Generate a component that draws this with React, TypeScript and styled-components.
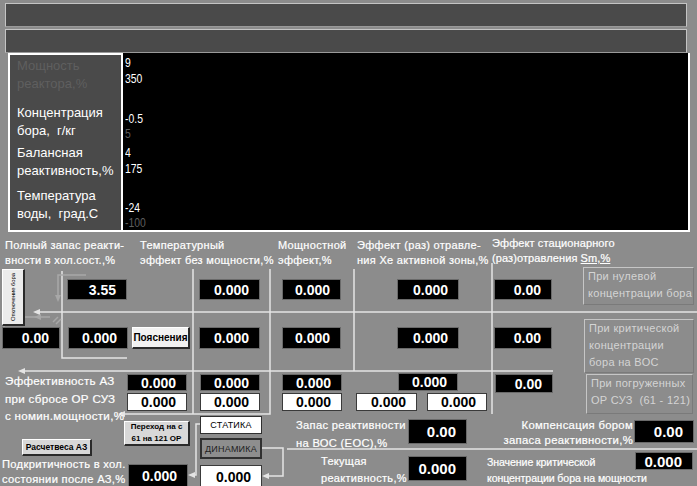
import styled, { createGlobalStyle, css } from "styled-components";

const DIAGRAM_TOP = 231;

const GlobalStyle = createGlobalStyle`
  html, body {
    margin: 0;
    padding: 0;
    background: #8c8c8c;
    overflow: hidden;
  }
  body {
    font-family: "Liberation Sans", Arial, sans-serif;
  }
`;

type Place = { $x: number; $y: number; $w?: number; $h?: number };

const placed = css<Place>`
  position: absolute;
  box-sizing: border-box;
  left: ${(p) => p.$x}px;
  top: ${(p) => p.$y - DIAGRAM_TOP}px;
  ${(p) => (p.$w !== undefined ? `width: ${p.$w}px;` : "")}
  ${(p) => (p.$h !== undefined ? `height: ${p.$h}px;` : "")}
`;

const Screen = styled.div`
  position: relative;
  width: 697px;
  height: 486px;
  overflow: hidden;
  background: #8c8c8c;
  padding-top: 3px;
  box-sizing: border-box;
`;

const TitleBar = styled.div<{ $gap?: number }>`
  margin: ${(p) => p.$gap ?? 0}px 10px 0 5px;
  height: 24px;
  box-sizing: border-box;
  background: #4a4a4a;
  border: 1px solid #c4c4c4;
  border-bottom-color: #9a9a9a;
`;

const ChartArea = styled.div`
  display: flex;
  margin-left: 8px;
  width: 682px;
  height: 179px;
`;

const Legend = styled.div`
  width: 115px;
  box-sizing: border-box;
  background: #4a4a4a;
  border: 2px solid #ffffff;
  padding-left: 7px;
  display: flex;
  flex-direction: column;
`;

const LegendItem = styled.div<{ $gap: number; $dim?: boolean }>`
  margin-top: ${(p) => p.$gap}px;
  font-size: 13px;
  line-height: 18px;
  color: ${(p) => (p.$dim ? "#5f5f5f" : "#ffffff")};
  white-space: pre;
`;

const Plot = styled.div`
  position: relative;
  flex: 1;
  background: #000000;
  border-right: 2px solid #ffffff;
  border-bottom: 2px solid #ffffff;
`;

const AxisLabel = styled.span<{ $top: number; $dim?: boolean }>`
  position: absolute;
  left: 2px;
  top: ${(p) => p.$top}px;
  font-size: 13px;
  line-height: 13px;
  transform: scaleX(0.8);
  transform-origin: left center;
  color: ${(p) => (p.$dim ? "#5e5e5e" : "#ffffff")};
`;

const Diagram = styled.div`
  position: relative;
  height: ${486 - DIAGRAM_TOP}px;
`;

const Caption = styled.div<
  Place & { $size?: number; $lh?: number; $align?: string; $spacing?: number }
>`
  ${placed};
  font-size: ${(p) => p.$size ?? 11}px;
  line-height: ${(p) => p.$lh ?? 15}px;
  color: #ffffff;
  white-space: pre;
  text-align: ${(p) => p.$align ?? "left"};
  letter-spacing: ${(p) => p.$spacing ?? 0.3}px;
  -webkit-text-stroke: 0.2px #ffffff;
  u {
    text-decoration: underline;
  }
`;

const Readout = styled.div<Place & { $light?: boolean; $size?: number }>`
  ${placed};
  display: flex;
  align-items: center;
  justify-content: flex-end;
  padding-right: 10px;
  font-weight: 700;
  font-size: ${(p) => p.$size ?? 14}px;
  background: ${(p) => (p.$light ? "#ffffff" : "#000000")};
  color: ${(p) => (p.$light ? "#000000" : "#ffffff")};
  border: 1px solid ${(p) => (p.$light ? "#3a3a3a" : "#6a6a6a")};
`;

const OptionFrame = styled.div<Place>`
  ${placed};
  border: 1px solid #c6c6c6;
  border-right-color: #7a7a7a;
  border-bottom-color: #7a7a7a;
  padding: 0 0 0 4px;
  font-size: 11px;
  line-height: 17px;
  letter-spacing: 0.3px;
  color: #d4d4d4;
  white-space: pre;
`;

const BevelButton = styled.div<Place & { $size: number; $tone?: string }>`
  ${placed};
  display: flex;
  align-items: center;
  justify-content: center;
  text-align: center;
  background: ${(p) => p.$tone ?? "#d8d8d8"};
  border: 1px solid #ffffff;
  border-right: 2px solid #2a2a2a;
  border-bottom: 2px solid #2a2a2a;
  font-size: ${(p) => p.$size}px;
  line-height: ${(p) => p.$size + 4}px;
  font-weight: 700;
  color: #000000;
  white-space: pre;
`;

const VerticalButton = styled(BevelButton)`
  span {
    writing-mode: vertical-rl;
    transform: rotate(180deg);
    white-space: nowrap;
    font-weight: 400;
    letter-spacing: -0.1px;
  }
`;

const ModeButton = styled.div<Place & { $active?: boolean }>`
  ${placed};
  display: flex;
  align-items: center;
  justify-content: center;
  font-size: 9px;
  letter-spacing: 0.2px;
  background: ${(p) => (p.$active ? "#ffffff" : "#8e8e8e")};
  color: ${(p) => (p.$active ? "#000000" : "#1e1e1e")};
  border: ${(p) => (p.$active ? "1px solid #303030" : "2px solid #303030")};
`;

const Wires = styled.svg`
  position: absolute;
  left: 0;
  top: 0;
  pointer-events: none;
`;

type Value = { x: number; y: number; w: number; h: number; v: string; light?: boolean; size?: number };

const readouts: Value[] = [
  { x: 67, y: 278, w: 60, h: 21, v: "3.55" },
  { x: 199, y: 278, w: 61, h: 21, v: "0.000" },
  { x: 282, y: 278, w: 59, h: 21, v: "0.000" },
  { x: 397, y: 278, w: 62, h: 21, v: "0.000" },
  { x: 494, y: 278, w: 58, h: 21, v: "0.00" },

  { x: 2, y: 326, w: 58, h: 22, v: "0.00" },
  { x: 68, y: 326, w: 60, h: 22, v: "0.000" },
  { x: 199, y: 326, w: 61, h: 22, v: "0.000" },
  { x: 282, y: 326, w: 59, h: 22, v: "0.000" },
  { x: 397, y: 326, w: 62, h: 22, v: "0.000" },
  { x: 494, y: 326, w: 58, h: 22, v: "0.00" },

  { x: 127, y: 373, w: 60, h: 17, v: "0.000" },
  { x: 200, y: 373, w: 60, h: 17, v: "0.000" },
  { x: 282, y: 373, w: 60, h: 17, v: "0.000" },
  { x: 398, y: 372, w: 60, h: 18, v: "0.000" },
  { x: 495, y: 373, w: 58, h: 19, v: "0.00" },

  { x: 127, y: 392, w: 60, h: 18, v: "0.000", light: true },
  { x: 200, y: 392, w: 60, h: 18, v: "0.000", light: true },
  { x: 282, y: 392, w: 60, h: 18, v: "0.000", light: true },
  { x: 356, y: 392, w: 61, h: 18, v: "0.000", light: true },
  { x: 427, y: 392, w: 60, h: 18, v: "0.000", light: true },

  { x: 128, y: 463, w: 60, h: 24, v: "0.000" },
  { x: 200, y: 464, w: 62, h: 23, v: "0.000", light: true },
  { x: 408, y: 418, w: 59, h: 25, v: "0.00", size: 15 },
  { x: 408, y: 455, w: 59, h: 25, v: "0.000", size: 15 },
  { x: 634, y: 419, w: 60, h: 23, v: "0.00", size: 15 },
  { x: 635, y: 451, w: 58, h: 18, v: "0.000", size: 15 },
];

type Label = {
  x: number;
  y: number;
  text: string;
  size?: number;
  lh?: number;
  align?: string;
  w?: number;
  spacing?: number;
};

const captions: Label[] = [
  { x: 5, y: 237, text: "Полный запас реакти-\nвности в хол.сост.,%" },
  { x: 140, y: 237, text: "Температурный\nэффект без мощности,%" },
  { x: 278, y: 237, text: "Мощностной\nэффект,%" },
  { x: 357, y: 237, text: "Эффект (раз) отравле-\nния Хе активной зоны,%" },
  { x: 5, y: 371, text: "Эффективность АЗ\nпри сбросе ОР СУЗ\nс номин.мощности,%", size: 11.6, lh: 17.5 },
  { x: 2, y: 456, text: "Подкритичность в хол.\nсостоянии после АЗ,%", size: 11.2, lh: 15 },
  { x: 296, y: 415, text: "Запас реактивности\nна ВОС (ЕОС),%", size: 11.2, lh: 18 },
  { x: 321, y: 452, text: "Текущая\nреактивность,%", size: 11, lh: 17 },
  {
    x: 487,
    y: 417,
    w: 146,
    text: "Компенсация бором\nзапаса реактивности,%",
    size: 11.3,
    lh: 15,
    align: "right",
  },
  {
    x: 487,
    y: 453,
    text: "Значение критической\nконцентрации бора на мощности",
    size: 10.6,
    lh: 16,
    spacing: -0.1,
  },
];

const options = [
  { x: 583, y: 266, w: 111, h: 38, text: "При нулевой\nконцентрации бора" },
  { x: 584, y: 318, w: 110, h: 54, text: "При критической\nконцентрации\nбора на ВОС" },
  { x: 586, y: 373, w: 107, h: 40, text: "При погруженных\nОР СУЗ  (61 - 121)" },
];

const axis = [
  { top: 3, v: "9" },
  { top: 19, v: "350" },
  { top: 59, v: "-0.5" },
  { top: 74, v: "5", dim: true },
  { top: 93, v: "4" },
  { top: 109, v: "175" },
  { top: 148, v: "-24" },
  { top: 163, v: "-100", dim: true },
];

const WIRE = "#e4e4e4";
const DIM = "#a8a8a8";

function Arrow({ x, y, dir, color }: { x: number; y: number; dir: "left" | "down"; color: string }) {
  const d =
    dir === "left"
      ? `M${x} ${y} L${x + 7} ${y - 3} L${x + 7} ${y + 3} Z`
      : `M${x} ${y} L${x - 3} ${y - 7} L${x + 3} ${y - 7} Z`;
  return <path d={d} fill={color} stroke="none" />;
}

function Connectors() {
  return (
    <Wires width={697} height={486 - DIAGRAM_TOP} viewBox={`0 ${DIAGRAM_TOP} 697 ${486 - DIAGRAM_TOP}`}>
      <g fill="none" stroke={WIRE} strokeWidth={1.5}>
        <path d="M62 270 V357 H127" />
        <path d="M193 268 V413" />
        <path d="M124 413 H270 V268" />
        <path d="M354 268 V370" />
        <path d="M24 370 H553" />
        <path d="M492 262 V413" />
        <path d="M39 311 H697" />
        <path d="M287 448 H697" />
        <path d="M200 423 H196 V474 H194" />
        <path d="M262 447 H283 V475 H268" />
      </g>
      <Arrow x={18} y={370} dir="left" color={WIRE} />
      <Arrow x={33} y={311} dir="left" color={WIRE} />
      <Arrow x={118} y={413} dir="left" color={WIRE} />
      <Arrow x={188} y={474} dir="left" color={WIRE} />
      <Arrow x={262} y={475} dir="left" color={WIRE} />

      <g fill="none" stroke={DIM} strokeWidth={1.5}>
        <path d="M86 274 H58 V294" />
        <path d="M50 316 H40" />
        <path d="M53 321 L58 316 M56 323 L61 318" />
        <path d="M4 345 V316 H36" />
      </g>
      <Arrow x={58} y={301} dir="down" color={DIM} />
      <Arrow x={34} y={316} dir="left" color={DIM} />
    </Wires>
  );
}

export default function App() {
  return (
    <>
      <GlobalStyle />
      <Screen>
        <TitleBar />
        <TitleBar $gap={2} />
        <ChartArea>
          <Legend>
            <LegendItem $gap={2} $dim>{"Мощность\nреактора,%"}</LegendItem>
            <LegendItem $gap={11}>{"Концентрация\nбора,  г/кг"}</LegendItem>
            <LegendItem $gap={4}>{"Балансная\nреактивность,%"}</LegendItem>
            <LegendItem $gap={7}>{"Температура\nводы,  град.С"}</LegendItem>
          </Legend>
          <Plot>
            {axis.map((a) => (
              <AxisLabel key={a.top} $top={a.top} $dim={a.dim}>
                {a.v}
              </AxisLabel>
            ))}
          </Plot>
        </ChartArea>

        <Diagram>
          <Connectors />

          {captions.map((c) => (
            <Caption
              key={c.text}
              $x={c.x}
              $y={c.y}
              $w={c.w}
              $lh={c.lh}
              $size={c.size}
              $align={c.align}
              $spacing={c.spacing}
            >
              {c.text}
            </Caption>
          ))}
          <Caption $x={492} $y={235} $lh={14.5} $spacing={0.1}>
            {"Эффект стационарного\n(раз)отравления "}
            <u>Sm,%</u>
          </Caption>

          {readouts.map((r) => (
            <Readout
              key={`${r.x}-${r.y}`}
              $x={r.x}
              $y={r.y}
              $w={r.w}
              $h={r.h}
              $light={r.light}
              $size={r.size}
            >
              {r.v}
            </Readout>
          ))}

          {options.map((o) => (
            <OptionFrame key={o.text} $x={o.x} $y={o.y} $w={o.w} $h={o.h}>
              {o.text}
            </OptionFrame>
          ))}

          <VerticalButton $x={2} $y={268} $w={23} $h={57} $size={6} $tone="#ececec">
            <span>Отключение бора</span>
          </VerticalButton>
          <BevelButton $x={132} $y={326} $w={58} $h={22} $size={10} $tone="#f2f2f2">
            Пояснения
          </BevelButton>
          <BevelButton $x={124} $y={420} $w={66} $h={25} $size={8}>
            {"Переход на с\n61 на 121 ОР"}
          </BevelButton>
          <BevelButton $x={22} $y={438} $w={70} $h={17} $size={8.5}>
            Расчетвеса АЗ
          </BevelButton>

          <ModeButton $x={200} $y={415} $w={62} $h={18} $active>
            СТАТИКА
          </ModeButton>
          <ModeButton $x={200} $y={437} $w={62} $h={21}>
            ДИНАМИКА
          </ModeButton>
        </Diagram>
      </Screen>
    </>
  );
}
